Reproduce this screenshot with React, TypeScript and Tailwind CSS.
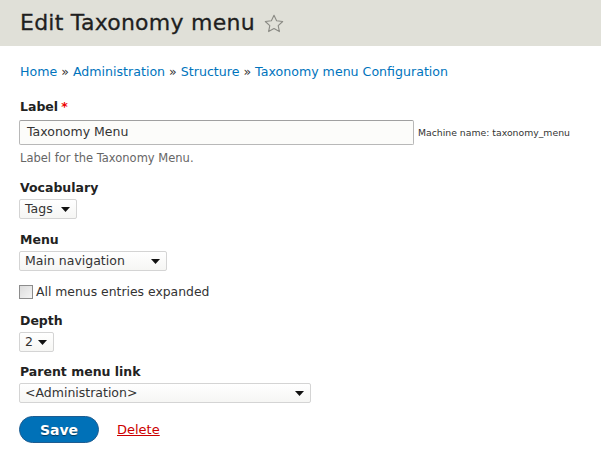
import { useState } from 'react'

const crumbs = ['Home', 'Administration', 'Structure', 'Taxonomy menu Configuration']

function FakeSelect({ value, width }: { value: string; width: string }) {
  return (
    <div
      className={`mt-[3px] flex h-[20px] ${width} items-center justify-between rounded-[2px] border border-[#d4d4d4] bg-gradient-to-b from-white to-[#f6f6f4] pl-[5px] pr-[6px] text-[12.5px] leading-none text-[#333]`}
    >
      <span>{value}</span>
      <svg width="9" height="5" viewBox="0 0 9 5" className="shrink-0">
        <path d="M0 0h9L4.5 5z" fill="#111" />
      </svg>
    </div>
  )
}

function FieldLabel({ children, required }: { children: string; required?: boolean }) {
  return (
    <div className="h-[16px] text-[12.5px] font-bold leading-[16px] text-[#222]">
      {children}
      {required && <span className="ml-[3px] text-[#e00]">*</span>}
    </div>
  )
}

export default function App() {
  const [expanded, setExpanded] = useState(false)

  return (
    <div className="min-h-[475px] w-[601px] bg-white font-['DejaVu_Sans',sans-serif] text-[#333]">
      <div className="flex h-[46px] items-center bg-[#e0e0d8] px-5">
        <h1 className="text-[22px] font-normal leading-none tracking-[0.25px] text-[#1f1f1f] [-webkit-text-stroke:0.3px_#1f1f1f]">
          Edit Taxonomy menu
        </h1>
        <svg width="20" height="19" viewBox="0 0 20 19" className="ml-[9px]">
          <path
            d="M10 1.2l2.6 5.6 6.1.7-4.5 4.1 1.2 6-5.4-3.1-5.4 3.1 1.2-6L1.3 7.5l6.1-.7z"
            fill="none"
            stroke="#8a8a84"
            strokeWidth="1.1"
            strokeLinejoin="round"
          />
        </svg>
      </div>

      <div className="px-5">
        <nav className="mt-[18px] h-[16px] text-[12.6px] leading-[16px]">
          {crumbs.map((c, i) => (
            <span key={c}>
              {i > 0 && <span className="text-[#333]"> » </span>}
              <a className="text-[#0074bd]">{c}</a>
            </span>
          ))}
        </nav>

        <div className="mt-[19px]">
          <FieldLabel required>Label</FieldLabel>
          <div className="-ml-px mt-[5px] flex items-center">
            <div className="flex h-[25px] w-[395px] shrink-0 items-center rounded-[2px] border border-[#b8b8b8] border-t-[#a0a0a0] bg-[#fcfcfa] px-[7px] text-[12.5px] text-[#333]">
              Taxonomy Menu
            </div>
            <span className="ml-[4px] whitespace-nowrap text-[9.3px] leading-none text-[#333]">Machine name: taxonomy_menu</span>
          </div>
          <p className="mt-[5px] h-[16px] text-[11.5px] leading-[16px] text-[#666]">Label for the Taxonomy Menu.</p>
        </div>

        <div className="mt-[14px]">
          <FieldLabel>Vocabulary</FieldLabel>
          <div className="-ml-px">
            <FakeSelect value="Tags" width="w-[58px]" />
          </div>
        </div>

        <div className="mt-[13px]">
          <FieldLabel>Menu</FieldLabel>
          <div className="-ml-px">
            <FakeSelect value="Main navigation" width="w-[148px]" />
          </div>
        </div>

        <label className="mt-[13px] flex h-[16px] items-center" onClick={() => setExpanded(!expanded)}>
          <span className="-ml-px flex h-[14px] w-[14px] items-center justify-center border border-[#8c8c8c] bg-gradient-to-br from-[#dcdcdc] to-[#f4f4f4]">
            {expanded && <span className="text-[10px] leading-none">✓</span>}
          </span>
          <span className="ml-[3px] text-[12.4px] leading-[16px] text-[#333]">All menus entries expanded</span>
        </label>

        <div className="mt-[13px]">
          <FieldLabel>Depth</FieldLabel>
          <div className="-ml-px">
            <FakeSelect value="2" width="w-[35px]" />
          </div>
        </div>

        <div className="mt-[12px]">
          <FieldLabel>Parent menu link</FieldLabel>
          <div className="-ml-px">
            <FakeSelect value="<Administration>" width="w-[292px]" />
          </div>
        </div>

        <div className="mt-[13px] flex items-center">
          <button className="-ml-px h-[27px] w-[80px] rounded-full border border-[#1e5c90] bg-[#0071b8] text-[14px] font-bold leading-none text-white [text-shadow:0_1px_1px_rgba(0,0,0,0.5)]">
            Save
          </button>
          <a className="ml-[18px] text-[13px] leading-none text-[#c00] underline">Delete</a>
        </div>
      </div>
    </div>
  )
}
